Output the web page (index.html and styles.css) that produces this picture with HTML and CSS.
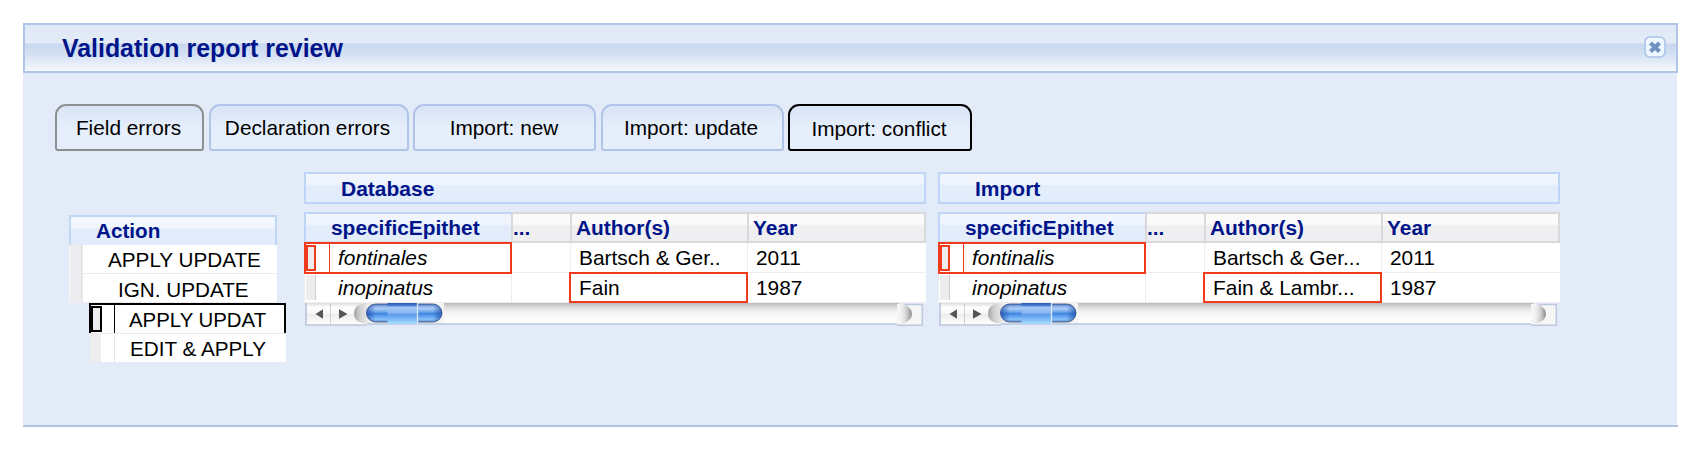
FILE: index.html
```html
<!DOCTYPE html>
<html lang="en">
<head>
<meta charset="utf-8">
<title>Validation report review</title>
<link rel="stylesheet" href="styles.css">
</head>
<body>
<svg class="defs" width="0" height="0" aria-hidden="true">
  <defs>
    <linearGradient id="track" x1="0" y1="0" x2="0" y2="1">
      <stop offset="0" stop-color="#b9b9bb"/><stop offset=".2" stop-color="#dcdcdc"/><stop offset=".5" stop-color="#f6f6f6"/><stop offset="1" stop-color="#ffffff"/>
    </linearGradient>
    <linearGradient id="button" x1="0" y1="0" x2="0" y2="1">
      <stop offset="0" stop-color="#dedede"/><stop offset=".2" stop-color="#ffffff"/><stop offset=".48" stop-color="#f6f6f6"/><stop offset=".5" stop-color="#ececec"/><stop offset="1" stop-color="#ffffff"/>
    </linearGradient>
    <linearGradient id="thumb" x1="0" y1="0" x2="0" y2="1">
      <stop offset="0" stop-color="#2c5cb8"/><stop offset=".1" stop-color="#7fa9e6"/><stop offset=".25" stop-color="#a9cbf5"/><stop offset=".45" stop-color="#6ea6ec"/><stop offset=".52" stop-color="#3f83df"/><stop offset=".85" stop-color="#86c0fa"/><stop offset="1" stop-color="#5b8ac8"/>
    </linearGradient>
    <linearGradient id="thumbmid" x1="0" y1="0" x2="0" y2="1">
      <stop offset="0" stop-color="#2c56b4"/><stop offset=".12" stop-color="#4a7bd0"/><stop offset=".2" stop-color="#a6c8f4"/><stop offset=".48" stop-color="#86b5f2"/><stop offset=".55" stop-color="#5b9aec"/><stop offset="1" stop-color="#a6dbff"/>
    </linearGradient>
    <linearGradient id="shade" x1="0" y1="0" x2="1" y2="0">
      <stop offset="0" stop-color="#1d4ea8" stop-opacity=".75"/><stop offset=".12" stop-color="#1d4ea8" stop-opacity="0"/><stop offset=".88" stop-color="#1d4ea8" stop-opacity="0"/><stop offset="1" stop-color="#1d4ea8" stop-opacity=".75"/>
    </linearGradient>
    <linearGradient id="capl" gradientUnits="userSpaceOnUse" x1="49" y1="0" x2="66" y2="0">
      <stop offset="0" stop-color="#a4a4a4"/><stop offset=".35" stop-color="#cfcfcf"/><stop offset="1" stop-color="#f4f4f4"/>
    </linearGradient>
    <linearGradient id="capr" x1="0" y1="0" x2="1" y2="0">
      <stop offset="0" stop-color="#fafafa" stop-opacity="0"/><stop offset=".6" stop-color="#d4d4d4"/><stop offset="1" stop-color="#8f8f8f"/>
    </linearGradient>
    <symbol id="scrollbar" viewBox="0 0 620 24">
      <rect x="0" y="0" width="64" height="22.5" fill="url(#button)"/>
      <path d="M1 0V22M0 22H62" stroke="#b9c4dc" stroke-width="1.6" fill="none"/>
      <path d="M25.5 1V21" stroke="#cfcfcf" stroke-width="1"/>
      <path d="M10.5 11L18 6.3V15.7ZM42.5 11L34 6.3V15.7Z" fill="#555"/>
      <path d="M62 0Q49 1 49 10.500T62 20.500H139V0Z" fill="url(#capl)"/>
      <rect x="139" y="0" width="455" height="20" fill="url(#track)"/>
      <rect x="62" y="20" width="532" height="2" fill="#c3d0e8"/>
      <rect x="61.500" y="1" width="75.500" height="18" rx="9" fill="url(#thumb)" stroke="#56688c" stroke-width="1"/>
      <rect x="61.500" y="1" width="75.500" height="18" rx="9" fill="url(#shade)"/>
      <rect x="82.500" y="0" width="30" height="21" fill="url(#thumbmid)"/>
      <path d="M112.500 0V21.500" stroke="#dce9fa" stroke-width="1.3"/>
      <rect x="592" y="1" width="26" height="22" fill="#f6f6f6"/>
      <path d="M592 1H599Q607 5 607 11T599 20L592 21Z" fill="url(#capr)"/>
      <path d="M592 22.300H617.300V1.500H600" fill="none" stroke="#bcc8de" stroke-width="1.500"/>
    </symbol>
  </defs>
</svg>
<main class="window">
  <header class="titlebar">
    <h1>Validation report review</h1>
    <svg class="close" width="22" height="22" viewBox="0 0 22 22" role="button" aria-label="Close">
      <rect x="1" y="1" width="20" height="20" rx="5" fill="#eef7ff" stroke="#a9c4e8" stroke-width="1.600"/>
      <path d="M6.500 7L15.500 15.500M15.500 7L6.500 15.500" stroke="#7091c0" stroke-width="4.200"/>
    </svg>
  </header>
  <section class="content">
    <nav class="tabs">
      <div class="tab tab-focus">Field errors</div>
      <div class="tab tab-wide">Declaration errors</div>
      <div class="tab tab-new">Import: new</div>
      <div class="tab tab-update">Import: update</div>
      <div class="tab tab-active">Import: conflict</div>
    </nav>
    <div class="columns">
      <div class="actions">
        <div class="action-head">Action</div>
        <div class="action-row"><span>APPLY UPDATE</span></div>
        <div class="action-row"><span class="ign">IGN. UPDATE</span></div>
        <div class="edit-row edit-active"><i class="handle"></i><span>APPLY UPDAT</span></div>
        <div class="edit-row"><i class="handle"></i><span>EDIT &amp; APPLY</span></div>
      </div>
      <section class="source">
        <h2>Database</h2>
        <div class="row head"><b class="main">specificEpithet</b><b>...</b><b>Author(s)</b><b>Year</b></div>
        <div class="row"><em class="changed"><i class="handle"></i>fontinales</em><span></span><span>Bartsch &amp; Ger..</span><span>2011</span></div>
        <div class="row"><em><i class="handle"></i>inopinatus</em><span></span><span class="changed">Fain</span><span>1987</span></div>
        <svg class="scroll" width="620" height="24"><use href="#scrollbar"/></svg>
      </section>
      <section class="source">
        <h2>Import</h2>
        <div class="row head"><b class="main">specificEpithet</b><b>...</b><b>Author(s)</b><b>Year</b></div>
        <div class="row"><em class="changed"><i class="handle"></i>fontinalis</em><span></span><span>Bartsch &amp; Ger...</span><span>2011</span></div>
        <div class="row"><em><i class="handle"></i>inopinatus</em><span></span><span class="changed">Fain &amp; Lambr...</span><span>1987</span></div>
        <svg class="scroll" width="620" height="24"><use href="#scrollbar"/></svg>
      </section>
    </div>
  </section>
</main>
</body>
</html>
```

FILE: styles.css
```css
* { box-sizing: border-box; }
body { margin: 0; height: 452px; overflow: hidden; background: #fff; color: #000; font: 21px/24px "Liberation Sans", Arial, sans-serif; white-space: nowrap; }
.defs { display: block; }
.window { width: 1655px; margin: 23px 0 0 23px; }
.titlebar { display: flex; align-items: flex-start; justify-content: space-between; height: 50px; padding: 11px 10px 0 37px; border: 2px solid #b1c6e6; background: linear-gradient(#dfe9f7 0, #e4ebf7 18px, #c8d8f0 19px, #d5e1f3 30px, #f5f8fd 46px); }
h1, h2 { margin: 0; color: #00148a; }
h1 { font-size: 24.9px; line-height: 24px; }
.content { width: 1655px; height: 354px; padding: 31px 0 0 32px; background: linear-gradient(90deg, #e3ebf8 1654px, #fff 1654px); border-bottom: 2px solid #adc3e1; }
.tabs { display: flex; height: 47px; font-size: 20.8px; }
.tab { height: 47px; margin-right: 4px; padding-top: 10px; border: 2px solid #b0c4e7; border-radius: 11px 11px 3px 3px; background: linear-gradient(#d8e5f6, #e7effc 60%, #e5edfb); text-align: center; }
.tab-focus { width: 149px; padding-right: 2px; border-color: #8c9090; margin-right: 5px; }
.tab-wide { width: 200px; padding-right: 3px; }
.tab-new { width: 183px; padding-right: 1px; margin-right: 5px; }
.tab-update { width: 183px; padding-right: 3px; }
.tab-active { width: 184px; padding-top: 11px; padding-right: 2px; border-color: #000; }
.columns { display: flex; align-items: flex-start; padding: 21px 0 0 14px; }
.actions { width: 235px; padding-top: 43px; font-size: 20.7px; }
.action-head { width: 208px; height: 30px; padding: 2px 0 0 25px; border: 2px solid #bed5f5; border-bottom: 0; color: #00148a; font-weight: bold; background: linear-gradient(#f2f6fd 11px, #e2ecfa 12px); }
.action-row { width: 208px; height: 29px; padding: 3px 0 0 37px; background: linear-gradient(90deg, #ededef 10px, #d5d5d5 11px, #fff 12px); border-left: 2px solid #f2f2f3; border-bottom: 1px solid #ececef; }
.action-row:nth-child(3) { padding-top: 4px; }
.action-row .ign { margin-left: 10px; }
.edit-row { display: flex; width: 196px; height: 29px; margin-left: 21px; background: #fff; border-top: 1px solid #e8e8ea; }
.edit-row > span { flex: 1; padding: 3px 0 0 15px; border-left: 1px solid #e5e5e5; }
.edit-row .handle { width: 11px; margin-right: 13px; background: #ededef; }
.edit-active { width: 197px; height: 30px; margin-left: 20px; border: 2px solid #000; border-bottom: 0; font-size: 20.4px; }
.edit-active .handle { height: 26px; margin-top: 1px; border: 2px solid #000; }
.edit-active > span { padding-top: 3px; padding-left: 14px; border-left: 1.500px solid #000; margin-left: -1px; }
.source { width: 622px; margin-right: 12px; font-size: 20.9px; }
h2 { height: 32px; margin-bottom: 8px; padding: 3px 0 0 35px; border: 2px solid #bed5f5; background: linear-gradient(#f0f5fd 10px, #e2ecfa 12px, #e2edfc); font-size: 21px; line-height: 24px; }
.row { display: grid; grid-template-columns: 207px 59px 177px 179px; height: 30px; }
.row > * { position: relative; padding: 3px 0 0 8px; background: #fff; border-left: 1px solid #ededed; border-bottom: 1px solid #eee; }
.row > em { padding-left: 33px; }
.row > em .handle { position: absolute; left: 1px; top: 2px; width: 10px; height: 25px; background: #ededef; border-right: 1px solid #ccc; }
.head { height: 31px; }
.head > b { padding: 2px 0 0 4px; border: 2px solid #d9d9db; border-right: 0; color: #00148a; background: linear-gradient(#fafafa 10px, #efeff1 12px); }
.head > b:nth-child(2) { padding-left: 0; }
.head > b:last-child { border-right: 2px solid #d9d9db; }
.head > .main { padding-left: 25px; border-color: #bed5f5; border-bottom-color: #d3ddea; background: linear-gradient(#f0f5fd 10px, #e2ecfa 12px); }
.row > .changed { z-index: 1; margin: -1px -1px 0 -1px; padding-top: 2px; padding-left: 8px; border: 2px solid #f03a1c; }
.row > em.changed { margin: -1px -1px -1px 0; padding: 2px 0 0 32px; background: linear-gradient(90deg, #fff 23px, #f03a1c 23px, #f03a1c 24.5px, #fff 24.5px); }
.row > em.changed .handle { height: 26px; top: 1px; left: 0; border: 2px solid #f03a1c; }
.scroll { display: block; margin-left: 1px; }
```
